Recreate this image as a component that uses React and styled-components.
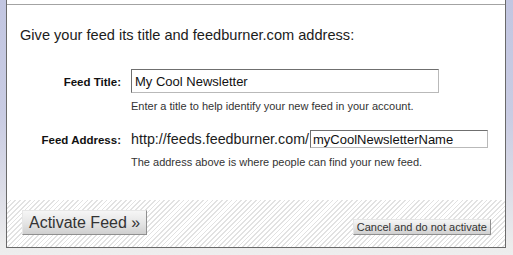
import React, { useState } from "react";
import styled, { createGlobalStyle } from "styled-components";

const GlobalStyle = createGlobalStyle`
  html, body {
    margin: 0;
    padding: 0;
  }
  body {
    width: 513px;
    height: 255px;
    overflow: hidden;
    font-family: "Liberation Sans", Arial, sans-serif;
    background: linear-gradient(
      180deg,
      #c2c6e1 0%,
      #c9cce3 45%,
      #dcdde7 75%,
      #ececec 96%,
      #eeeeee 100%
    );
  }
`;

const Frame = styled.div`
  height: 255px;
  box-sizing: border-box;
  padding: 0 7px 0 6px;
`;

const Panel = styled.div`
  height: 248px;
  box-sizing: border-box;
  background: #fff;
  border: 1px solid #6a6a6a;
  border-top: none;
  display: flex;
  flex-direction: column;
`;

const TopBar = styled.div`
  height: 4px;
  border-bottom: 1px solid #a3a3a3;
`;

const Content = styled.div`
  flex: 1;
  padding: 22px 0 0 0;
`;

const Heading = styled.div`
  font-size: 14.6px;
  line-height: 17px;
  color: #1c1c1c;
  padding-left: 13px;
  margin-bottom: 25px;
`;

const FieldRow = styled.div`
  display: flex;
  align-items: baseline;
  margin-top: ${(p) => p.$top || 0}px;
`;

const Label = styled.label`
  width: 114px;
  flex: none;
  margin-right: 10px;
  text-align: right;
  font-size: 11.5px;
  font-weight: bold;
  color: #111;
`;

const Prefix = styled.span`
  font-size: 14.3px;
  color: #1c1c1c;
  margin-right: 1px;
`;

const Input = styled.input`
  box-sizing: border-box;
  width: ${(p) => p.$width}px;
  height: ${(p) => p.$height}px;
  margin: 0;
  padding: 0 0 0 ${(p) => p.$pad}px;
  border: 1px solid;
  border-color: #6f6f6f #b9b9b9 #b9b9b9 #6f6f6f;
  font-family: "Liberation Sans", Arial, sans-serif;
  font-size: 13px;
  color: #111;
  background: #fff;
  outline: none;
`;

const Help = styled.div`
  margin: ${(p) => p.$top}px 0 0 124px;
  font-size: 11px;
  line-height: 13px;
  color: #333;
`;

const Footer = styled.div`
  height: 47px;
  box-sizing: border-box;
  padding: 0 14px 12px 15px;
  display: flex;
  justify-content: space-between;
  align-items: flex-end;
  background: repeating-linear-gradient(
    135deg,
    #ffffff 0px,
    #ffffff 2.2px,
    #e2e2e2 2.2px,
    #e2e2e2 3.4px
  );
`;

const Button = styled.button`
  box-sizing: border-box;
  height: ${(p) => (p.$big ? 25 : 16)}px;
  padding: 0 ${(p) => (p.$big ? 6 : 3)}px;
  margin: 0;
  border: 1px solid;
  border-color: #e6e6e6 #8f8f8f #8f8f8f #e6e6e6;
  background: linear-gradient(180deg, #f6f6f6 0%, #e4e4e4 55%, #cfcfcf 100%);
  font-family: "Liberation Sans", Arial, sans-serif;
  font-size: ${(p) => (p.$big ? 16 : 11)}px;
  line-height: 1;
  color: #333;
  cursor: pointer;
  white-space: nowrap;
`;

export default function App() {
  const [title, setTitle] = useState("My Cool Newsletter");
  const [address, setAddress] = useState("myCoolNewsletterName");

  return (
    <>
      <GlobalStyle />
      <Frame>
        <Panel>
          <TopBar />
          <Content>
            <Heading>Give your feed its title and feedburner.com address:</Heading>

            <FieldRow>
              <Label>Feed Title:</Label>
              <Input
                $width={308}
                $height={24}
                $pad={3}
                value={title}
                onChange={(e) => setTitle(e.target.value)}
              />
            </FieldRow>
            <Help $top={7}>
              Enter a title to help identify your new feed in your account.
            </Help>

            <FieldRow $top={17}>
              <Label>Feed Address:</Label>
              <Prefix>http://feeds.feedburner.com/</Prefix>
              <Input
                $width={178}
                $height={18}
                $pad={2}
                value={address}
                onChange={(e) => setAddress(e.target.value)}
              />
            </FieldRow>
            <Help $top={8}>
              The address above is where people can find your new feed.
            </Help>
          </Content>
          <Footer>
            <Button $big>Activate Feed »</Button>
            <Button>Cancel and do not activate</Button>
          </Footer>
        </Panel>
      </Frame>
    </>
  );
}
